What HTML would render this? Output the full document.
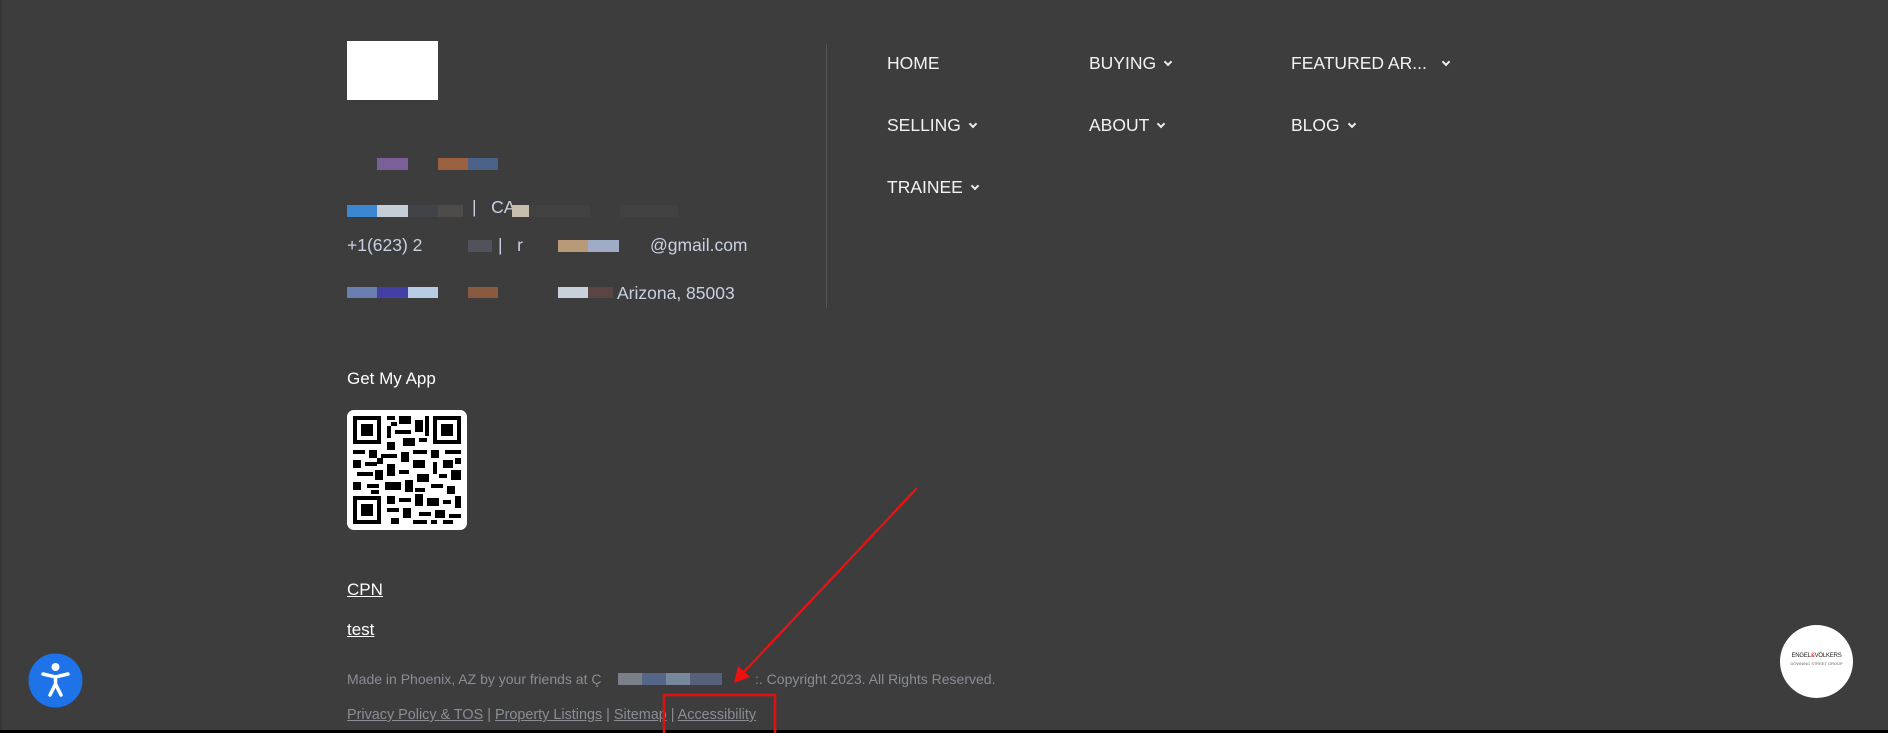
<!DOCTYPE html>
<html><head><meta charset="utf-8"><style>
*{margin:0;padding:0;box-sizing:border-box}
body{width:1888px;height:733px;background:#3d3d3d;font-family:"Liberation Sans",Arial,sans-serif;position:relative;overflow:hidden}
.a{position:absolute;white-space:nowrap}
.b{position:absolute}
.nav{position:absolute;color:#f2f2f2;font-size:17.5px;line-height:20px}
.chev{display:inline-block;width:6px;height:6px;border-right:2px solid #eee;border-bottom:2px solid #eee;transform:rotate(45deg);margin-left:9px;position:relative;top:-4px}
.ct{color:#c9d0e2;font-size:17.5px;line-height:20px}
.ft{color:#8a8d94;font-size:14px;line-height:18px}
.ft u{text-decoration:underline}
</style></head><body>
<div class="b" style="left:0;top:0;width:2px;height:733px;background:#353535"></div>
<div class="b" style="left:347px;top:41px;width:91px;height:59px;background:#fff"></div>
<div class="b" style="left:826px;top:44px;width:1px;height:264px;background:#555"></div>

<div class="b" style="left:377px;top:158px;width:31px;height:12px;background:#7b5f98"></div>
<div class="b" style="left:438px;top:158px;width:30px;height:12px;background:#9a6040"></div>
<div class="b" style="left:468px;top:158px;width:30px;height:12px;background:#4a6288"></div>
<div class="b" style="left:347px;top:205px;width:30px;height:12px;background:#3b87d0"></div>
<div class="b" style="left:377px;top:205px;width:31px;height:12px;background:#c5cdd6"></div>
<div class="b" style="left:408px;top:205px;width:30px;height:12px;background:#404347"></div>
<div class="b" style="left:438px;top:205px;width:25px;height:12px;background:#4e4c4a"></div>
<div class="a ct" style="left:472px;top:197px">|&nbsp;&nbsp; CA</div>
<div class="b" style="left:512px;top:205px;width:17px;height:12px;background:#c8bcac"></div>
<div class="b" style="left:529px;top:205px;width:61px;height:12px;background:#414141"></div>
<div class="b" style="left:620px;top:205px;width:58px;height:12px;background:#414141"></div>
<div class="a ct" style="left:347px;top:235px">+1(623) 2</div>
<div class="b" style="left:468px;top:240px;width:24px;height:12px;background:#50535a"></div>
<div class="a ct" style="left:498px;top:235px">|&nbsp;&nbsp; r</div>
<div class="b" style="left:558px;top:240px;width:30px;height:12px;background:#b89a78"></div>
<div class="b" style="left:588px;top:240px;width:31px;height:12px;background:#a0acc6"></div>
<div class="a ct" style="left:650px;top:235px">@gmail.com</div>
<div class="b" style="left:347px;top:287px;width:30px;height:11px;background:#6a7fb0"></div>
<div class="b" style="left:377px;top:287px;width:31px;height:11px;background:#4240a4"></div>
<div class="b" style="left:408px;top:287px;width:30px;height:11px;background:#b8cce6"></div>
<div class="b" style="left:468px;top:287px;width:30px;height:11px;background:#8a5a40"></div>
<div class="b" style="left:558px;top:287px;width:30px;height:11px;background:#c8d0dc"></div>
<div class="b" style="left:588px;top:287px;width:25px;height:11px;background:#5a4444"></div>
<div class="a ct" style="left:617px;top:283px">Arizona, 85003</div>

<div class="nav" style="left:887px;top:53px">HOME</div>
<div class="nav" style="left:1089px;top:53px">BUYING<span class="chev"></span></div>
<div class="nav" style="left:1291px;top:53px">FEATURED AR...<span class="chev" style="margin-left:16px"></span></div>
<div class="nav" style="left:887px;top:115px">SELLING<span class="chev"></span></div>
<div class="nav" style="left:1089px;top:115px">ABOUT<span class="chev"></span></div>
<div class="nav" style="left:1291px;top:115px">BLOG<span class="chev"></span></div>
<div class="nav" style="left:887px;top:177px">TRAINEE<span class="chev"></span></div>

<div class="a" style="left:347px;top:369px;color:#fff;font-size:17px">Get My App</div>
<svg class="b" style="left:347px;top:410px" width="120" height="120" viewBox="0 0 120 120">
<rect width="120" height="120" rx="7" fill="#fff"/>
<g fill="#000">
<rect x="6" y="6" width="28" height="28"/><rect x="86" y="6" width="28" height="28"/><rect x="6" y="86" width="28" height="28"/>
</g>
<g fill="#fff"><rect x="10" y="10" width="20" height="20"/><rect x="90" y="10" width="20" height="20"/><rect x="10" y="90" width="20" height="20"/></g>
<g fill="#000"><rect x="14" y="14" width="12" height="12"/><rect x="94" y="14" width="12" height="12"/><rect x="14" y="94" width="12" height="12"/>
<rect x="40" y="6" width="8" height="4"/><rect x="52" y="6" width="12" height="8"/><rect x="68" y="10" width="8" height="12"/><rect x="40" y="16" width="4" height="12"/><rect x="48" y="20" width="16" height="4"/><rect x="56" y="28" width="12" height="8"/><rect x="72" y="28" width="8" height="4"/><rect x="40" y="32" width="8" height="8"/><rect x="78" y="6" width="4" height="20"/><rect x="44" y="12" width="6" height="4"/>
<rect x="6" y="40" width="12" height="4"/><rect x="22" y="40" width="8" height="8"/><rect x="34" y="44" width="16" height="4"/><rect x="54" y="42" width="8" height="10"/><rect x="66" y="40" width="14" height="4"/><rect x="84" y="40" width="8" height="8"/><rect x="98" y="40" width="16" height="4"/>
<rect x="6" y="50" width="8" height="8"/><rect x="18" y="52" width="12" height="4"/><rect x="40" y="54" width="8" height="12"/><rect x="66" y="50" width="12" height="8"/><rect x="86" y="52" width="4" height="12"/><rect x="96" y="50" width="10" height="8"/><rect x="30" y="48" width="6" height="6"/><rect x="108" y="48" width="6" height="6"/>
<rect x="10" y="62" width="16" height="4"/><rect x="28" y="60" width="8" height="10"/><rect x="52" y="60" width="10" height="4"/><rect x="70" y="64" width="12" height="8"/><rect x="92" y="64" width="8" height="4"/><rect x="104" y="60" width="10" height="10"/>
<rect x="6" y="72" width="8" height="8"/><rect x="20" y="74" width="12" height="4"/><rect x="38" y="72" width="16" height="8"/><rect x="58" y="70" width="8" height="12"/><rect x="84" y="74" width="12" height="4"/><rect x="100" y="76" width="8" height="8"/><rect x="24" y="80" width="8" height="4"/><rect x="68" y="78" width="10" height="4"/>
<rect x="40" y="86" width="8" height="8"/><rect x="52" y="88" width="12" height="4"/><rect x="68" y="84" width="8" height="12"/><rect x="80" y="88" width="12" height="8"/><rect x="96" y="90" width="8" height="4"/><rect x="108" y="86" width="6" height="12"/>
<rect x="40" y="98" width="12" height="4"/><rect x="56" y="98" width="8" height="10"/><rect x="72" y="102" width="12" height="4"/><rect x="88" y="100" width="10" height="8"/><rect x="102" y="104" width="12" height="4"/>
<rect x="44" y="108" width="8" height="6"/><rect x="66" y="110" width="14" height="4"/><rect x="84" y="110" width="6" height="4"/><rect x="96" y="110" width="10" height="4"/>
</g></svg>

<div class="a" style="left:347px;top:580px;color:#fff;font-size:17px;text-decoration:underline">CPN</div>
<div class="a" style="left:347px;top:620px;color:#fff;font-size:17px;text-decoration:underline">test</div>

<div class="a ft" style="left:347px;top:670px">Made in Phoenix, AZ by your friends at &#x00C7;</div>
<div class="b" style="left:618px;top:673px;width:24px;height:12px;background:#7a8088"></div>
<div class="b" style="left:642px;top:673px;width:24px;height:12px;background:#566688"></div>
<div class="b" style="left:666px;top:673px;width:24px;height:12px;background:#78889c"></div>
<div class="b" style="left:690px;top:673px;width:32px;height:12px;background:#56607a"></div>
<div class="a ft" style="left:755px;top:670px">:. Copyright 2023. All Rights Reserved.</div>
<div class="a ft" style="left:347px;top:706px;font-size:14.4px"><u>Privacy Policy &amp; TOS</u> | <u>Property Listings</u> | <u>Sitemap</u> | <u>Accessibility</u></div>

<div class="b" style="left:0;top:730px;width:1888px;height:3px;background:#000"></div>

<svg class="b" style="left:0;top:0" width="1888" height="733">
<line x1="917" y1="488" x2="742" y2="674" stroke="#ee1111" stroke-width="2.2"/>
<polygon points="734,683 738,666 750,677" fill="#ee1111"/>
<rect x="664" y="695" width="111" height="40" fill="none" stroke="#e01010" stroke-width="2.5"/>
</svg>

<svg class="b" style="left:28px;top:653px" width="55" height="55" viewBox="0 0 55 55">
<circle cx="27.5" cy="27.5" r="27" fill="#1f73e8"/>
<circle cx="27.5" cy="14" r="4" fill="#fff"/>
<path d="M15 21 L27.5 24 L40 21" stroke="#fff" stroke-width="3.5" fill="none" stroke-linecap="round"/>
<path d="M27.5 24 V31 L22 42 M27.5 31 L33 42" stroke="#fff" stroke-width="3.5" fill="none" stroke-linecap="round"/>
</svg>

<div class="b" style="left:1780px;top:625px;width:73px;height:73px;border-radius:50%;background:#fff"></div>
<div class="a" style="left:1780px;top:653px;width:73px;text-align:center;font-size:6px;color:#222;letter-spacing:-0.2px">ENGEL<span style="color:#d00">&amp;</span>VÖLKERS</div>
<div class="a" style="left:1780px;top:661px;width:73px;text-align:center;font-size:4px;color:#666">DOWNING STREET GROUP</div>
</body></html>
